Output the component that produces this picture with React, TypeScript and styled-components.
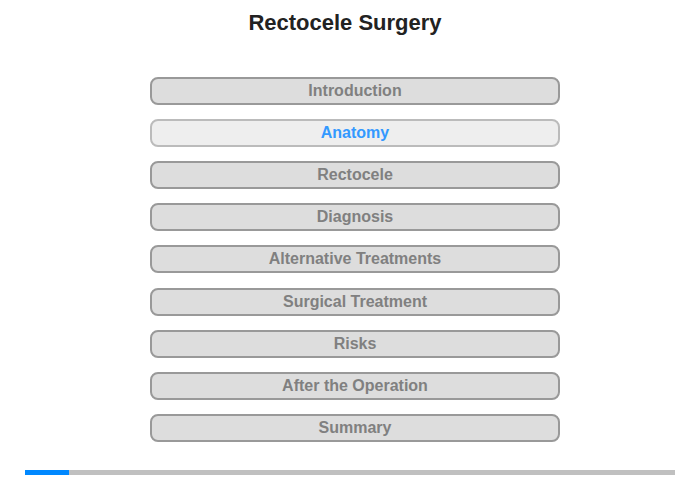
import React from 'react';
import styled, { createGlobalStyle } from 'styled-components';

const GlobalStyle = createGlobalStyle`
  body {
    margin: 0;
    background: #ffffff;
    font-family: "Liberation Sans", Arial, sans-serif;
  }
`;

const Page = styled.div`
  width: 700px;
  height: 480px;
  display: flex;
  flex-direction: column;
`;

const Title = styled.h1`
  width: 690px;
  margin: 0;
  padding-top: 10px;
  font-size: 22px;
  line-height: 25px;
  font-weight: bold;
  text-align: center;
  color: #222222;
`;

const Menu = styled.nav`
  display: flex;
  flex-direction: column;
  gap: 14.12px;
  margin: 42px 0 0 150px;
  width: 410px;
`;

const MenuButton = styled.div<{ $active?: boolean }>`
  box-sizing: border-box;
  height: 28px;
  display: flex;
  align-items: center;
  justify-content: center;
  border: 2px solid ${(p) => (p.$active ? '#bbbbbb' : '#999999')};
  border-radius: 8px;
  background: ${(p) => (p.$active ? '#eeeeee' : '#dddddd')};
  color: ${(p) => (p.$active ? '#3399ff' : '#808080')};
  font-size: 16px;
  font-weight: bold;
  cursor: pointer;
`;

const Progress = styled.div`
  margin: 28px 0 0 25px;
  width: 650px;
  height: 5px;
  background: #c0c0c0;
`;

const ProgressFill = styled.div`
  height: 100%;
  background: #0088ff;
`;

const chapters = [
  'Introduction',
  'Anatomy',
  'Rectocele',
  'Diagnosis',
  'Alternative Treatments',
  'Surgical Treatment',
  'Risks',
  'After the Operation',
  'Summary',
];

const App = () => {
  const current = 1;
  const progress = 44 / 650;

  return (
    <>
      <GlobalStyle />
      <Page>
        <Title>Rectocele Surgery</Title>
        <Menu>
          {chapters.map((c, i) => (
            <MenuButton key={c} $active={i === current}>
              {c}
            </MenuButton>
          ))}
        </Menu>
        <Progress>
          <ProgressFill style={{ width: `${progress * 100}%` }} />
        </Progress>
      </Page>
    </>
  );
};

export default App;
